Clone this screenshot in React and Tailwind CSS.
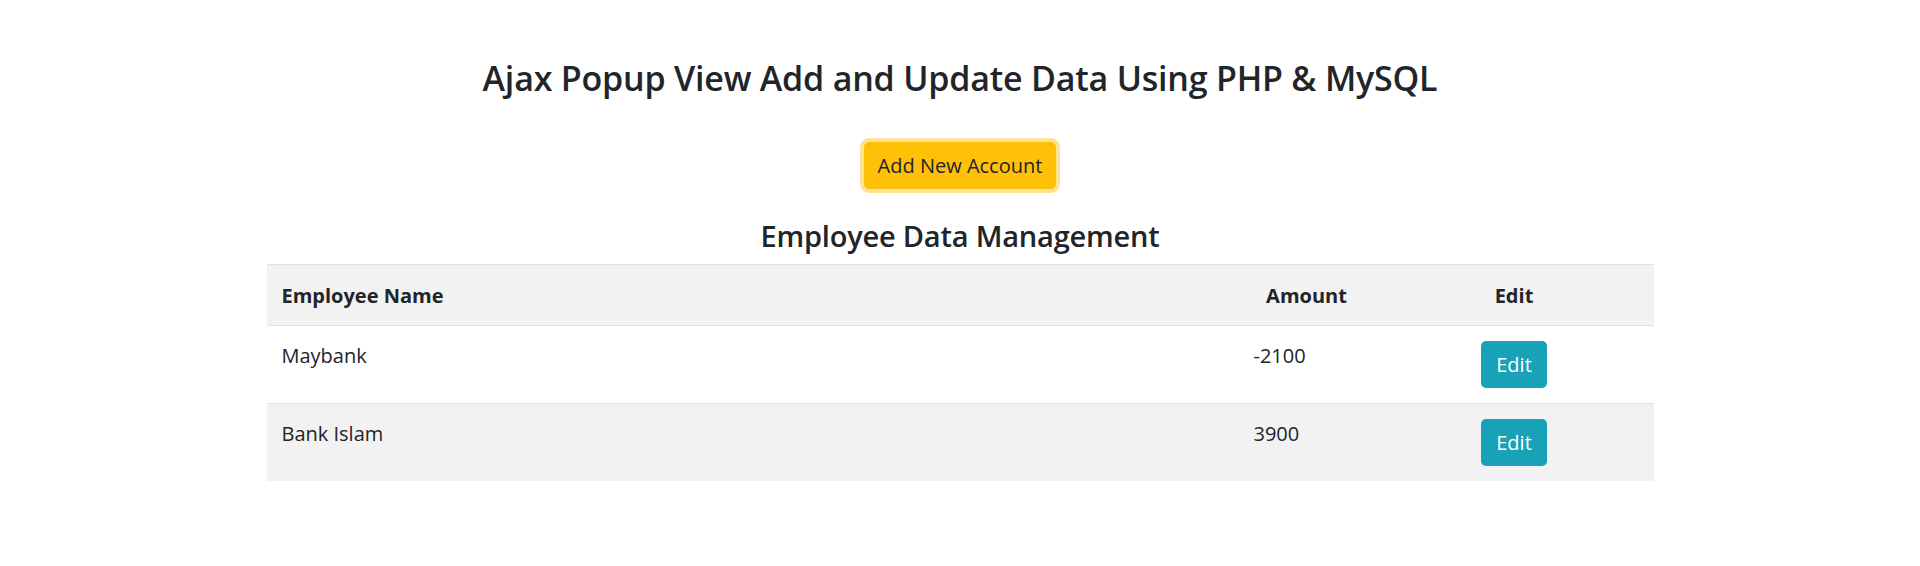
const accounts = [
  { id: 1, name: "Maybank", amount: "-2100" },
  { id: 2, name: "Bank Islam", amount: "3900" },
];

export default function App() {
  return (
    <div className="min-h-screen bg-white text-[#212529] font-['Segoe_UI','Open_Sans',sans-serif]">
      <div className="mx-auto w-[1387px] pt-[57px]">
        <h3 className="text-center text-[34px] font-semibold leading-[42px] tracking-[-0.2px]">
          Ajax Popup View Add and Update Data Using PHP &amp; MySQL
        </h3>

        <div className="mt-[43px] flex justify-center">
          <button className="h-[47px] w-[192px] rounded-[5px] border border-[#ffc107] bg-[#ffc107] text-[20px] leading-[30px] text-[#212529] shadow-[0_0_0_4px_rgba(255,203,60,0.55)]">
            Add New Account
          </button>
        </div>

        <h4 className="mt-[29px] text-center text-[29px] font-semibold leading-[36px] tracking-[-0.2px]">
          Employee Data Management
        </h4>

        {/* accounts table */}
        <table className="mt-[10px] w-full table-fixed border-collapse text-[20px] leading-[30px]">
          <thead>
            <tr className="h-[61px] border-y border-[#dee2e6] bg-[#f2f2f2]">
              <th className="w-[972px] px-[15px] pt-[1px] text-left font-bold">Employee Name</th>
              <th className="w-[136px] pt-[1px] text-center font-bold">Amount</th>
              <th className="w-[279px] pt-[1px] text-center font-bold">Edit</th>
            </tr>
          </thead>
          <tbody>
            {accounts.map((row, i) => (
              <tr
                key={row.id}
                className={
                  i % 2 === 1
                    ? "border-t border-[#dee2e6] bg-[#f2f2f2]"
                    : "border-t border-[#dee2e6] bg-white"
                }
              >
                <td className="px-[15px] py-[15px] align-top">{row.name}</td>
                <td className="px-[15px] py-[15px] align-top">{row.amount}</td>
                <td className="py-[15px] text-center align-top">
                  <button className="h-[47px] w-[66px] rounded-[5px] bg-[#17a2b8] text-[20px] leading-[30px] text-white">
                    Edit
                  </button>
                </td>
              </tr>
            ))}
          </tbody>
        </table>
      </div>
    </div>
  );
}
